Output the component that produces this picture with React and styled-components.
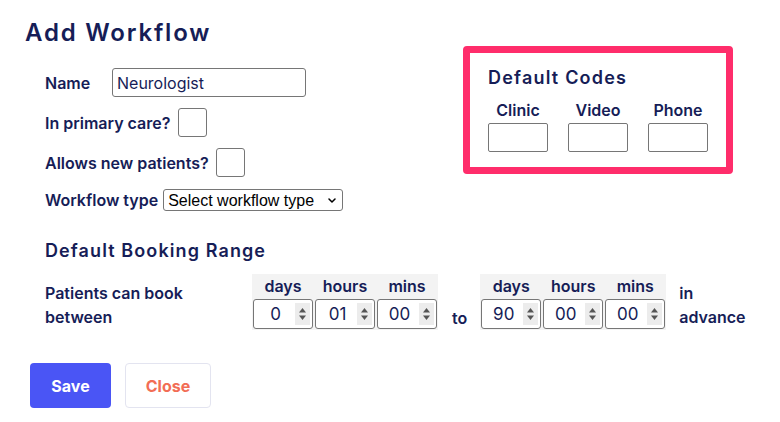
import React from 'react';
import styled, { createGlobalStyle } from 'styled-components';

const NAVY = '#161d57';
const BORDER = '#767676';

const Global = createGlobalStyle`
  html, body { margin: 0; padding: 0; background: #fff; }
  body { font-family: Inter, "Noto Sans", sans-serif; color: ${NAVY}; }
  * { box-sizing: border-box; }
`;

const Page = styled.div`
  width: 780px;
  height: 422px;
  padding: 17px 47px 0 25px;
`;

const Top = styled.div`
  display: flex;
  justify-content: space-between;
  align-items: flex-start;
`;

const LeftCol = styled.div`
  display: flex;
  flex-direction: column;
`;

const Title = styled.h1`
  margin: 0;
  font: 600 24px/32px Inter, sans-serif;
  letter-spacing: 1.8px;
  color: ${NAVY};
`;

const Form = styled.div`
  display: flex;
  flex-direction: column;
  gap: 11px;
  margin-top: 19px;
  padding-left: 20px;
`;

const Row = styled.div`
  display: flex;
  align-items: center;
  gap: ${(p) => p.$gap || 9}px;
  height: ${(p) => p.$h || 29}px;
  margin-top: ${(p) => p.$mt || 0}px;
`;

const Label = styled.label`
  font: 600 16px/20px Inter, sans-serif;
  min-width: ${(p) => (p.$w ? `${p.$w}px` : 'auto')};
  white-space: nowrap;
`;

const TextInput = styled.input`
  width: 194px;
  height: 29px;
  margin: 0;
  border: 1px solid ${BORDER};
  border-radius: 3px;
  padding: 0 4px;
  font: 400 16px Inter, sans-serif;
  color: ${NAVY};
  outline: none;
`;

const Checkbox = styled.input`
  appearance: none;
  width: 29px;
  height: 29px;
  margin: 0;
  border: 1px solid ${BORDER};
  border-radius: 3px;
  background: #fff;
`;

const SelectBox = styled.div`
  display: flex;
  align-items: center;
  width: 180px;
  height: 22px;
  border: 1px solid ${BORDER};
  border-radius: 3px;
  padding: 0 6px 0 4px;
`;

const Select = styled.select`
  appearance: none;
  flex: 1;
  min-width: 0;
  border: 0;
  background: transparent;
  padding: 0;
  margin: 0;
  font: 400 16px "Liberation Sans", Arial, sans-serif;
  color: #000;
  outline: none;
`;

const CodesBox = styled.section`
  margin-top: 29px;
  width: 270px;
  border: 7px solid #ff2d6b;
  border-radius: 4px;
  padding: 13px 18px 15px;
`;

const SubTitle = styled.h2`
  margin: 0;
  font: 600 18px/24px Inter, sans-serif;
  letter-spacing: ${(p) => p.$ls || 1.2}px;
  color: ${NAVY};
`;

const CodesGrid = styled.div`
  display: flex;
  gap: 20px;
  margin-top: 9px;
`;

const CodeField = styled.div`
  display: flex;
  flex-direction: column;
  align-items: center;
  gap: 2px;
  width: 60px;
`;

const CodeLabel = styled.label`
  font: 600 16px/22px Inter, sans-serif;
`;

const CodeInput = styled.input`
  width: 60px;
  height: 29px;
  margin: 0;
  border: 1px solid ${BORDER};
  border-radius: 2px;
`;

const Booking = styled.section`
  margin-top: 28px;
  padding-left: 20px;
`;

const RangeRow = styled.div`
  display: flex;
  align-items: stretch;
  margin-top: 11px;
  & > * { flex-shrink: 0; }
`;

const Prose = styled.div`
  width: ${(p) => (p.$w ? `${p.$w}px` : 'auto')};
  margin-left: ${(p) => p.$ml || 0}px;
  padding-top: 7px;
  font: 600 16px/24px Inter, sans-serif;
  white-space: nowrap;
`;

const To = styled.div`
  align-self: flex-end;
  margin: 0 13px 0 14px;
  font: 600 16px/24px Inter, sans-serif;
`;

const TimeGroup = styled.div`
  display: grid;
  grid-template-columns: repeat(3, 60px);
  grid-template-rows: 25px 30px;
  column-gap: 2px;
  padding: 0 1px 1px;
  background: #f3f3f3;
`;

const TimeLabel = styled.div`
  font: 600 16px/25px Inter, sans-serif;
  text-align: center;
`;

const NumberBox = styled.div`
  display: flex;
  align-items: center;
  height: 30px;
  border: 1px solid ${BORDER};
  border-radius: 3px;
  padding: 0 2px 0 0;
  background: #fff;
  & > svg { flex-shrink: 0; }
`;

const NumberInput = styled.input`
  flex: 1;
  min-width: 0;
  border: 0;
  margin: 0;
  padding: 0 0 0 2px;
  background: transparent;
  text-align: center;
  font: 400 17px Inter, sans-serif;
  color: ${NAVY};
  outline: none;
`;

const ButtonRow = styled.div`
  display: flex;
  gap: 14px;
  margin-top: 33px;
  padding-left: 5px;
`;

const Button = styled.button`
  height: 45px;
  width: ${(p) => p.$w}px;
  border-radius: 4px;
  font: 700 16px Inter, sans-serif;
  cursor: pointer;
  background: ${(p) => (p.$primary ? '#4a55f5' : '#fff')};
  color: ${(p) => (p.$primary ? '#fff' : '#f26d55')};
  border: ${(p) => (p.$primary ? '0' : '1px solid #e3e4f0')};
`;

const Chevron = () => (
  <svg width="8" height="5" viewBox="0 0 8 5" aria-hidden="true">
    <path d="M1 1 L4 4 L7 1" fill="none" stroke="#000" strokeWidth="1.5" strokeLinecap="round" strokeLinejoin="round" />
  </svg>
);

const Spinner = () => (
  <svg width="15" height="22" viewBox="0 0 15 22" aria-hidden="true">
    <rect width="15" height="22" fill="#ececec" />
    <path d="M4 9.5 L7.5 5 L11 9.5 Z" fill="#555" />
    <path d="M4 12.5 L7.5 17 L11 12.5 Z" fill="#555" />
  </svg>
);

const TimeFields = ({ values }) => (
  <TimeGroup>
    <TimeLabel>days</TimeLabel>
    <TimeLabel>hours</TimeLabel>
    <TimeLabel>mins</TimeLabel>
    {values.map((v, i) => (
      <NumberBox key={i}>
        <NumberInput defaultValue={v} />
        <Spinner />
      </NumberBox>
    ))}
  </TimeGroup>
);

export default function App() {
  return (
    <Page>
      <Global />
      <Top>
        <LeftCol>
          <Title>Add Workflow</Title>
          <Form>
            <Row $gap={10}>
              <Label $w={57}>Name</Label>
              <TextInput defaultValue="Neurologist" />
            </Row>
            <Row $gap={8}>
              <Label>In primary care?</Label>
              <Checkbox type="checkbox" />
            </Row>
            <Row $gap={7}>
              <Label>Allows new patients?</Label>
              <Checkbox type="checkbox" />
            </Row>
            <Row $h={22} $mt={1} $gap={5}>
              <Label>Workflow type</Label>
              <SelectBox>
                <Select defaultValue="">
                  <option value="">Select workflow type</option>
                </Select>
                <Chevron />
              </SelectBox>
            </Row>
          </Form>
        </LeftCol>
        <CodesBox>
          <SubTitle $ls={1.2}>Default Codes</SubTitle>
          <CodesGrid>
            {['Clinic', 'Video', 'Phone'].map((c) => (
              <CodeField key={c}>
                <CodeLabel>{c}</CodeLabel>
                <CodeInput />
              </CodeField>
            ))}
          </CodesGrid>
        </CodesBox>
      </Top>
      <Booking>
        <SubTitle $ls={1.1}>Default Booking Range</SubTitle>
        <RangeRow>
          <Prose $w={207}>
            Patients can book
            <br />
            between
          </Prose>
          <TimeFields values={['0', '01', '00']} />
          <To>to</To>
          <TimeFields values={['90', '00', '00']} />
          <Prose $ml={13}>
            in
            <br />
            advance
          </Prose>
        </RangeRow>
      </Booking>
      <ButtonRow>
        <Button $primary $w={81}>Save</Button>
        <Button $w={86}>Close</Button>
      </ButtonRow>
    </Page>
  );
}
